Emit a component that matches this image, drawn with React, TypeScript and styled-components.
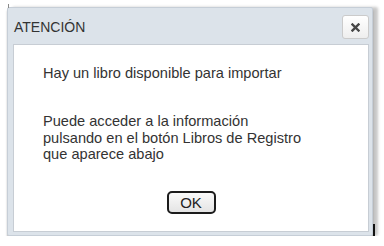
import styled, { createGlobalStyle } from 'styled-components';

const GlobalStyle = createGlobalStyle`
  html, body {
    margin: 0;
    padding: 0;
    background: #ffffff;
  }
  body {
    font-family: "Liberation Sans", Arial, sans-serif;
    color: #333333;
  }
  * {
    box-sizing: border-box;
  }
`;

function CloseIcon() {
  return (
    <svg width="9" height="9" viewBox="0 0 9 9" aria-hidden="true">
      <path d="M1.5 1.5 L7.5 7.5 M7.5 1.5 L1.5 7.5" stroke="#474747" strokeWidth="2.4" strokeLinecap="square" />
    </svg>
  );
}

function App() {
  return (
    <>
      <GlobalStyle />
      <Page>
        <Dialog>
          <TitleBar>
            <Title>ATENCIÓN</Title>
            <CloseButton type="button" aria-label="Cerrar">
              <CloseIcon />
            </CloseButton>
          </TitleBar>
          <Content>
            <Message>Hay un libro disponible para importar</Message>
            <Message $gap>
              Puede acceder a la información
              <br />
              pulsando en el botón Libros de Registro
              <br />
              que aparece abajo
            </Message>
            <ButtonRow>
              <OkButton type="button">OK</OkButton>
            </ButtonRow>
          </Content>
        </Dialog>
      </Page>
    </>
  );
}

export default App;

const Page = styled.div`
  padding: 7px 0 0 7px;
`;

const Dialog = styled.div`
  position: relative;
  width: 366px;
  background-color: #dce3ea;
  border: 1px solid #c6ced7;
  border-radius: 2px;
  padding: 0 3px 3px 5px;
  box-shadow: 0 3px 2px rgba(0, 0, 0, 0.28), 5px 0 3px rgba(0, 0, 0, 0.22);

  &::before {
    content: '';
    position: absolute;
    left: 0;
    top: -4px;
    width: 1px;
    height: 4px;
    background-color: #8a8a8a;
  }

  &::after {
    content: '';
    position: absolute;
    right: -3px;
    bottom: -4px;
    width: 2px;
    height: 15px;
    background-color: #111111;
  }
`;

const TitleBar = styled.div`
  height: 36px;
  display: flex;
  align-items: center;
  justify-content: space-between;
`;

const Title = styled.span`
  font-size: 14px;
  color: #333333;
  padding-left: 1px;
  margin-top: 2px;
`;

const CloseButton = styled.button`
  width: 27px;
  height: 24px;
  padding: 0;
  display: flex;
  align-items: center;
  justify-content: center;
  border: 1px solid #cbcbcb;
  border-radius: 3px;
  background: linear-gradient(#ffffff, #eeeeee);
  cursor: pointer;
  margin-top: 2px;
`;

const Content = styled.div`
  background-color: #ffffff;
  border: 1px solid #c7cdd4;
  padding: 20px 0 17px 29px;
`;

const Message = styled.p<{ $gap?: boolean }>`
  margin: ${({ $gap }) => ($gap ? '31.5px 0 0 0' : '0')};
  font-size: 14.6px;
  line-height: 16.5px;
  color: #333333;
`;

const ButtonRow = styled.div`
  display: flex;
  justify-content: center;
  margin: 28px 0 0 -29px;
`;

const OkButton = styled.button`
  width: 49px;
  height: 23px;
  padding: 0;
  border: 2px solid #1c1c1c;
  border-radius: 5px;
  background: linear-gradient(#fafafa, #e4e4e4);
  font-family: "Liberation Sans", Arial, sans-serif;
  font-size: 15px;
  color: #222222;
  cursor: pointer;
`;
